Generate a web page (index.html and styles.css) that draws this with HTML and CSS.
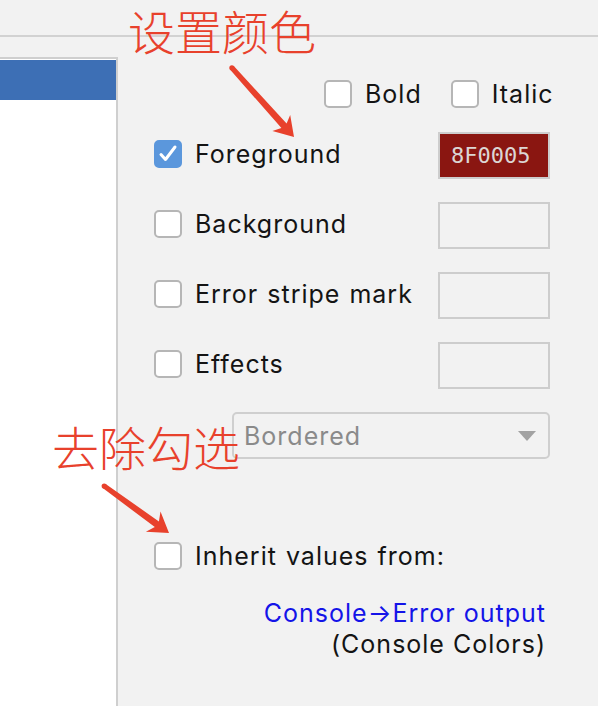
FILE: index.html
```html
<!DOCTYPE html>
<html lang="zh">
<head>
<meta charset="utf-8">
<title>Color settings</title>
<link rel="stylesheet" href="styles.css">
</head>
<body>
<div class="page">
  <div class="topbar"></div>
  <div class="main">
    <aside class="list">
      <div class="list-selected"></div>
    </aside>
    <section class="form">
      <div class="row-style">
        <label class="check"><span class="box"></span><span class="label">Bold</span></label>
        <label class="check italic-check"><span class="box"></span><span class="label">Italic</span></label>
      </div>
      <div class="attrs">
        <div class="attr">
          <label class="check"><span class="box checked"><svg class="tick" viewBox="0 0 28 28"><path d="M7 14.5 L11.5 19.5 L21 7" /></svg></span><span class="label">Foreground</span></label>
          <div class="swatch filled">8F0005</div>
        </div>
        <div class="attr">
          <label class="check"><span class="box"></span><span class="label">Background</span></label>
          <div class="swatch"></div>
        </div>
        <div class="attr">
          <label class="check"><span class="box"></span><span class="label">Error stripe mark</span></label>
          <div class="swatch"></div>
        </div>
        <div class="attr">
          <label class="check"><span class="box"></span><span class="label">Effects</span></label>
          <div class="swatch"></div>
        </div>
        <div class="select"><span class="select-text">Bordered</span><span class="caret"></span></div>
      </div>
      <div class="row-inherit">
        <label class="check"><span class="box"></span><span class="label">Inherit values from:</span></label>
      </div>
      <div class="link-block">
        <div class="link">Console→Error output</div>
        <div class="scheme">(Console Colors)</div>
      </div>
    </section>
  </div>
  <div class="note note-color">设置颜色</div>
  <div class="note note-uncheck">去除勾选</div>
  <svg class="arrows" viewBox="0 0 598 706" width="598" height="706">
    <circle cx="231.9" cy="67.8" r="2.6" />
    <polygon points="230.0,69.5 281.4,128.1 272.4,130.9 294,137 290.2,114.9 286.6,123.5 233.8,66.1" />
    <circle cx="104.2" cy="486.1" r="2.6" />
    <polygon points="102.7,488.1 154.8,527.0 145.9,531.7 169,533 160.5,511.5 158.9,521.4 105.7,484.1" />
  </svg>
</div>
</body>
</html>
```

FILE: styles.css
```css
html, body {
  margin: 0;
  padding: 0;
}

body {
  background: #f2f2f2;
  font-family: "Inter", "Liberation Sans", sans-serif;
  color: #141414;
}

.page {
  position: relative;
  width: 598px;
  height: 706px;
  overflow: hidden;
}

.topbar {
  height: 35px;
  border-bottom: 2px solid #d2d2d2;
}

.main {
  display: flex;
  padding-top: 20px;
  height: 649px;
}

.list {
  width: 116px;
  flex: none;
  background: #ffffff;
  border-top: 2px solid #cfcfcf;
  border-right: 2px solid #cfcfcf;
  padding-top: 1px;
}

.list-selected {
  height: 40px;
  background: #3d6fb5;
}

.form {
  flex: 1;
  min-width: 0;
  display: flex;
  flex-direction: column;
  padding: 0 48px 0 36px;
}

.check {
  display: flex;
  align-items: center;
  gap: 13px;
  flex: none;
}

.box {
  width: 28px;
  height: 28px;
  box-sizing: border-box;
  border: 2px solid #b6b6b6;
  border-radius: 5px;
  background: #ffffff;
  flex: none;
}

.box.checked {
  border-color: #5b97dc;
  background: #5b97dc;
  position: relative;
}

.tick {
  position: absolute;
  left: -2px;
  top: -2px;
  width: 28px;
  height: 28px;
  fill: none;
  stroke: #ffffff;
  stroke-width: 3;
  stroke-linecap: round;
  stroke-linejoin: round;
}

.label {
  font-size: 25px;
  line-height: 28px;
  letter-spacing: 1px;
  word-spacing: 1px;
  white-space: nowrap;
}

.row-style {
  display: flex;
  align-items: center;
  height: 34px;
  margin-top: 20px;
  padding-left: 170px;
  gap: 29px;
}

.attrs {
  display: flex;
  flex-direction: column;
  gap: 23px;
  margin-top: 21px;
}

.attr {
  display: flex;
  align-items: flex-start;
  justify-content: space-between;
  height: 47px;
}

.attr .check {
  margin-top: 8px;
}

.swatch {
  width: 112px;
  height: 47px;
  box-sizing: border-box;
  border: 2px solid #cdcdcd;
  flex: none;
}

.swatch.filled {
  background: #8a1611;
  color: #dcd6d4;
  font-family: "DejaVu Sans Mono", "Liberation Mono", monospace;
  font-size: 22px;
  line-height: 43px;
  padding-left: 11px;
}

.select {
  margin-left: 78px;
  height: 47px;
  box-sizing: border-box;
  border: 2px solid #cfcfcf;
  border-radius: 5px;
  display: flex;
  align-items: center;
  justify-content: space-between;
  padding: 0 12px 0 10px;
}

.select-text {
  font-size: 25px;
  letter-spacing: 1px;
  color: #8a8a8a;
}

.caret {
  width: 0;
  height: 0;
  border-left: 9px solid transparent;
  border-right: 9px solid transparent;
  border-top: 10px solid #a2a2a2;
}

.row-inherit {
  margin-top: 83px;
  display: flex;
}

.link-block {
  margin-top: 28px;
  padding-right: 4px;
  text-align: right;
  font-size: 25px;
  line-height: 31px;
  letter-spacing: 1px;
}

.link {
  color: #1414e8;
}

.scheme {
  color: #141414;
}

.note {
  position: absolute;
  font-family: "Noto Sans CJK SC", sans-serif;
  font-size: 47px;
  font-weight: 300;
  line-height: 1;
  color: #e8412c;
  white-space: nowrap;
}

.note-color {
  left: 128px;
  top: 6px;
}

.note-uncheck {
  left: 52px;
  top: 422px;
}

.arrows {
  position: absolute;
  left: 0;
  top: 0;
  pointer-events: none;
  fill: #e8412c;
}
```
